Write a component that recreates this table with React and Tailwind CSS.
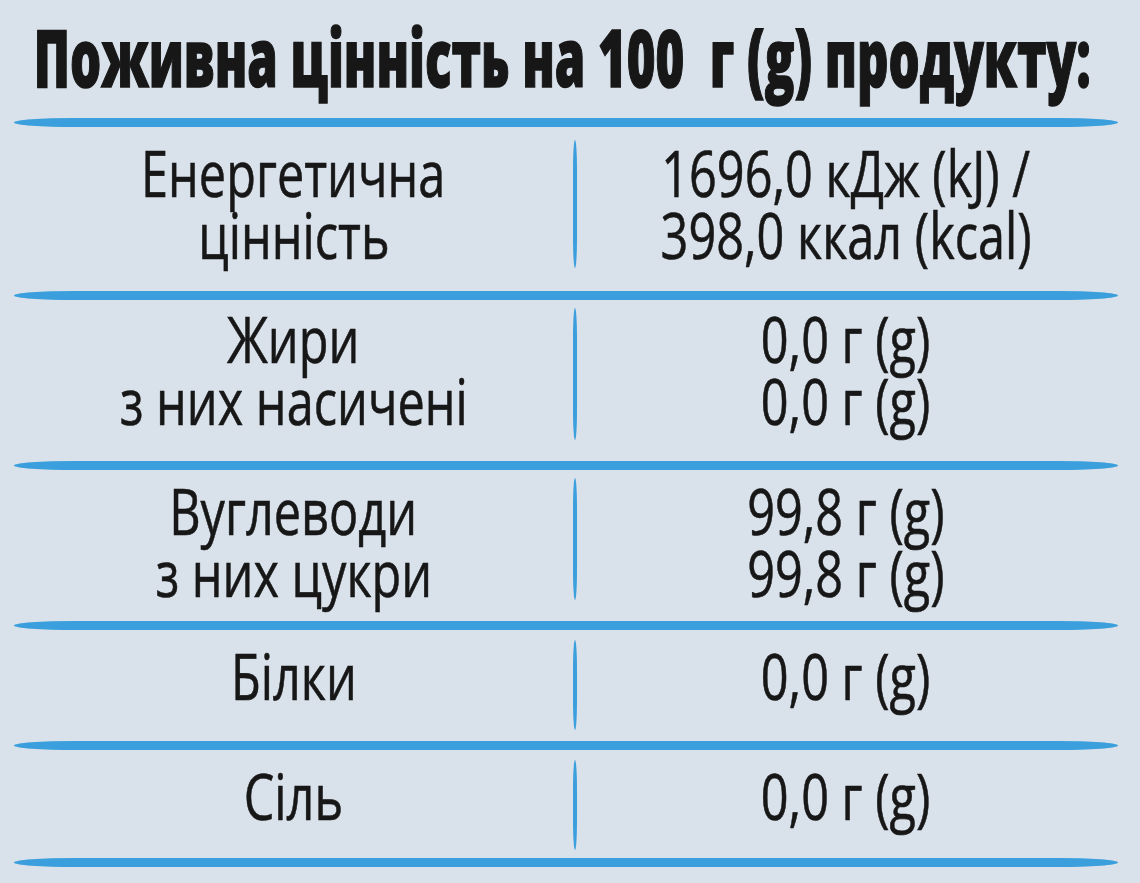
import React from "react";

// nutrition rows: left label lines, right value lines, row height + offsets
const rows = [
  {
    left: ["Енергетична", "цінність"],
    right: ["1696,0 кДж (kJ) /", "398,0 ккал (kcal)"],
    h: "h-[164px]",
    pb: "pb-[10px]",
    bar: "pt-[13px] pb-[23px]",
  },
  {
    left: ["Жири", "з них насичені"],
    right: ["0,0 г (g)", "0,0 г (g)"],
    h: "h-[161px]",
    pb: "pb-[22px]",
    bar: "pt-[8px] pb-[21px]",
  },
  {
    left: ["Вуглеводи", "з них цукри"],
    right: ["99,8 г (g)", "99,8 г (g)"],
    h: "h-[151px]",
    pb: "pb-[8px]",
    bar: "pt-[8px] pb-[21px]",
  },
  {
    left: ["Білки"],
    right: ["0,0 г (g)"],
    h: "h-[111px]",
    pb: "pb-[19px]",
    bar: "pt-[10px] pb-[11px]",
  },
  {
    left: ["Сіль"],
    right: ["0,0 г (g)"],
    h: "h-[108px]",
    pb: "pb-[16px]",
    bar: "pt-[10px] pb-[8px]",
  },
];

const Line = () => (
  <div className="ml-[14px] mr-[22px] h-[9px] shrink-0 bg-[#3a9fdc] rounded-[60px/4.5px]" />
);

const TextLines = ({ lines }) => (
  <div className="flex flex-col items-center">
    {lines.map((t, i) => (
      <span
        key={i}
        className="inline-block whitespace-nowrap text-[64px] leading-[62px] font-medium scale-x-[0.76] origin-center [-webkit-text-stroke:0.6px_#171717]"
      >
        {t}
      </span>
    ))}
  </div>
);

export default function App() {
  return (
    <div className="w-[1140px] h-[883px] overflow-hidden bg-[#d9e1ea] text-[#171717] font-['Open_Sans',sans-serif] flex flex-col">
      {/* Title */}
      <div className="h-[118px] shrink-0 pt-[16px] pr-[16px] flex justify-center">
        <h1 className="inline-block whitespace-nowrap text-[80px] leading-[80px] font-extrabold scale-x-[0.613] origin-center [-webkit-text-stroke:1.5px_#171717]">
          Поживна цінність на 100&nbsp; г (g) продукту:
        </h1>
      </div>
      <Line />

      {rows.map((r, i) => (
        <React.Fragment key={i}>
          <div className={`flex shrink-0 pl-[14px] ${r.h}`}>
            <div className={`w-[559px] flex items-center justify-center ${r.pb}`}>
              <TextLines lines={r.left} />
            </div>
            <div className={`w-[5px] flex ${r.bar}`}>
              <div className="w-[4px] bg-[#3a9fdc] rounded-[2px/30px]" />
            </div>
            <div className={`w-[536px] flex items-center justify-center ${r.pb}`}>
              <TextLines lines={r.right} />
            </div>
          </div>
          <Line />
        </React.Fragment>
      ))}
    </div>
  );
}
